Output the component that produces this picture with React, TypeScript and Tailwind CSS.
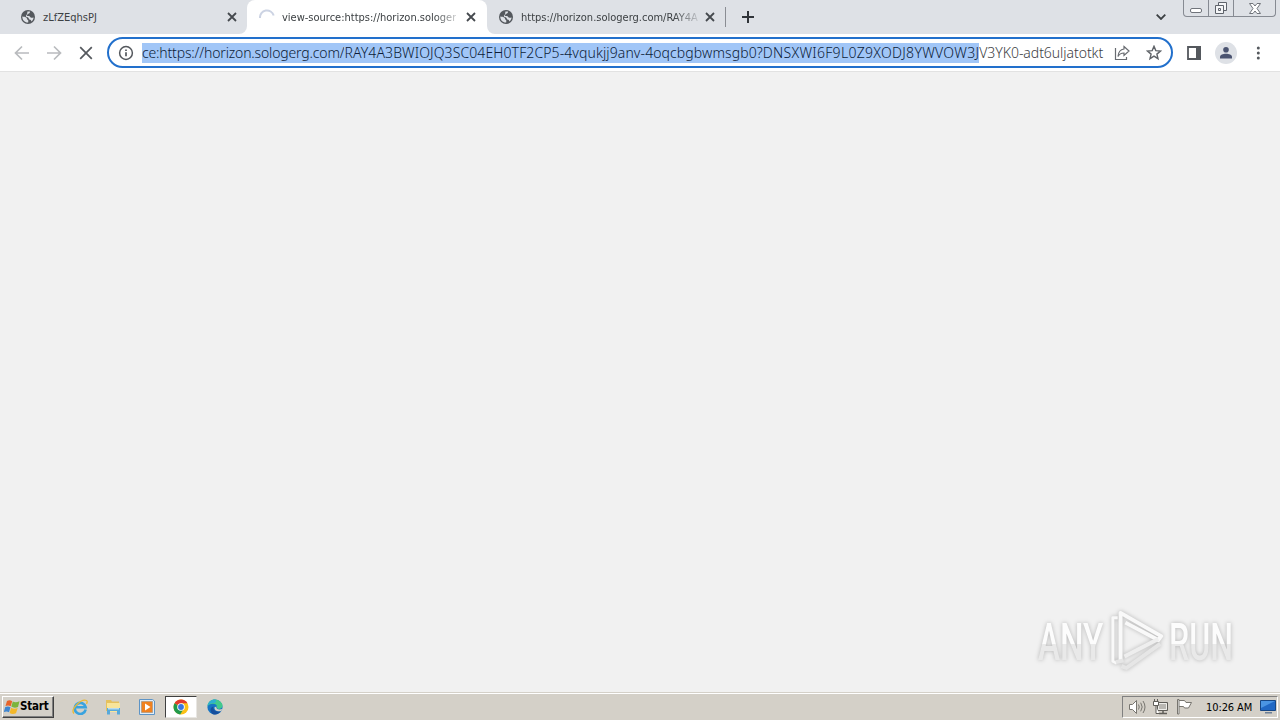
import React from 'react';

interface TabProps {
  title: string;
  loading?: boolean;
  fade?: boolean;
}

interface UrlPart {
  text: string;
  className: string;
}

// tracking differs per part, the address font runs wider on capitals
const urlParts: UrlPart[] = [
  { text: 'ce:https://horizon.sologerg.com/', className: 'bg-[#a1c6f7] text-[#0c1c38] tracking-[-0.16px]' },
  { text: 'RAY4A3BWIOJQ3SC04EH0TF2CP5-4vqukjj9anv-4oqcbgbwmsgb0?', className: 'bg-[#a1c6f7] text-[#0c1c38] tracking-[0.1px]' },
  { text: 'DNSXWI6F9L0Z9XODJ8YWVOW3J', className: 'bg-[#a1c6f7] text-[#0c1c38] tracking-[0.29px]' },
  { text: 'V3YK0-adt6uljatotkt', className: 'text-[#3c4043] tracking-[-0.05px]' },
];

const GlobeIcon = () => (
  <svg viewBox="0 0 16 16" className="w-4 h-4 shrink-0">
    <circle cx="8" cy="8" r="7" fill="#54585d" />
    <path
      d="M2.300 7.500c1.600.3 3.200.3 4.200 1.200.8.8.2 1.700 1.300 2.100.7.300.5 1.500.4 2.700C4.800 13.700 2.200 11 2.300 7.500zM7.400 2.500l2.600.1c.1 1.300-.6 2-1.700 2.100-.9.100-.4 1.100-1.300 1.400-.7.300-.2 1 .7.900 1.500-.2 2.200.2 2.500 1.100.3.900 1.800.6 3.400.4-.2 1.700-1 3-2.200 3.900-.3-1-.7-1.700-1.700-1.800-.9-.1-.8-1.400-1.400-1.900-.7-.6-1.900-.2-2.300-1.100-.4-1 .2-1.800 1.100-2.100"
      fill="#dee1e6"
    />
  </svg>
);

const CloseIcon = () => (
  <svg viewBox="0 0 10 10" className="w-2.5 h-2.5 shrink-0" fill="none" stroke="#45494e" strokeWidth="1.8">
    <path d="M1 1l8 8M9 1L1 9" />
  </svg>
);

const Tab: React.FC<TabProps> = ({ title, loading, fade }) => (
  <div className="flex items-center h-full w-[239px] shrink-0 pl-[11px] pr-[11px]">
    {loading ? (
      <svg viewBox="0 0 16 16" className="w-4 h-4 shrink-0" fill="none" stroke="#ccd3e3" strokeWidth="2">
        <path d="M1 9a7 7 0 0 1 13.700-2.500" />
      </svg>
    ) : (
      <GlobeIcon />
    )}
    <span
      className={`ml-[7px] pt-px whitespace-nowrap text-[11px] leading-[14px] text-[#3c4043] ${
        fade ? 'mask-[linear-gradient(to_right,#000_152px,transparent_182px)]' : ''
      }`}
    >
      {title}
    </span>
    <span className="ml-auto">
      <CloseIcon />
    </span>
  </div>
);

const WindowButtons = () => (
  <div className="flex w-[93px] h-[17px] border border-t-0 border-[#868a92] rounded-b-[4px] mr-1">
    <div className="w-[25px] border-r border-[#868a92] flex items-end justify-center pb-[3px]">
      <div className="w-3 h-[5px] border border-[#70747b] rounded-[2px] bg-white" />
    </div>
    <div className="w-[25px] border-r border-[#868a92] flex items-center justify-center">
      <svg viewBox="0 0 14 14" className="w-3.5 h-3.5" fill="#f4f5f7" stroke="#5e636b">
        <path d="M4.500 1.500h8v8h-8z" />
        <path d="M1.500 4.500h8v8h-8z" />
        <path d="M4.500 7.500h2v2h-2z" />
      </svg>
    </div>
    <div className="flex-1 flex items-center justify-center">
      <svg viewBox="0 0 12 11" className="w-3 h-[11px]" fill="#fff" stroke="#70747b">
        <path d="M.5.500h3.500l2 2.500 2-2.500h3.500l-3.500 5 3.500 5H8L6 8l-2 2.500H.5l3.500-5z" />
      </svg>
    </div>
  </div>
);

const TabStrip = () => (
  <div className="flex h-[34px] shrink-0 bg-white">
    <div className="w-[247px] shrink-0 bg-[#dee1e6] rounded-br-lg pl-[9px]">
      <Tab title="zLfZEqhsPJ" />
    </div>
    <div className="w-60 shrink-0 bg-[linear-gradient(#dee1e6_50%,#fff_50%)]">
      <div className="h-full bg-white rounded-t-lg pl-px">
        <Tab title="view-source:https://horizon.sologer" loading fade />
      </div>
    </div>
    <div className="flex-1 flex items-center bg-[#dee1e6] rounded-bl-lg">
      <Tab title="https://horizon.sologerg.com/RAY4A" fade />
      <div className="w-px h-5 -ml-px bg-[#8a8d93]" />
      <svg viewBox="0 0 12 12" className="w-3 h-3 ml-4" fill="none" stroke="#303439" strokeWidth="2">
        <path d="M6 0v12M0 6h12" />
      </svg>
      <div className="ml-auto h-full flex items-center">
        <svg viewBox="0 0 10 6" className="w-2.5 h-1.5 mr-[17px]" fill="none" stroke="#3c4043" strokeWidth="1.800">
          <path d="M.7.700L5 5 9.300.700" />
        </svg>
        <div className="h-full">
          <WindowButtons />
        </div>
      </div>
    </div>
  </div>
);

const Toolbar = () => (
  <div className="flex items-center h-[38px] shrink-0 bg-white border-b border-[#e2e2e2] pl-[14px]">
    <svg viewBox="0 0 16 16" className="w-4 h-4" fill="none" stroke="#b9bbbe" strokeWidth="1.700">
      <path d="M15 8H2M8 1.500L1.500 8 8 14.500" />
    </svg>
    <svg viewBox="0 0 16 16" className="w-4 h-4 ml-4" fill="none" stroke="#b9bbbe" strokeWidth="1.700">
      <path d="M1 8h13M8 1.500L14.500 8 8 14.500" />
    </svg>
    <svg viewBox="0 0 16 16" className="w-4 h-4 ml-4" fill="none" stroke="#54585d" strokeWidth="1.700">
      <path d="M2.200 2.200l11.600 11.600M13.800 2.200L2.200 13.800" />
    </svg>
    <div className="ml-[13px] w-[1066px] h-[31px] shrink-0 rounded-full border-2 border-[#2270cc] flex items-center pl-[9px]">
      <svg viewBox="0 0 16 16" className="w-4 h-4 shrink-0" fill="none" stroke="#54585d" strokeWidth="1.500">
        <circle cx="8" cy="8" r="6.400" />
        <path d="M8 7.200v4M8 4.400v1.600" strokeWidth="1.700" />
      </svg>
      <div className="ml-2 w-[963px] shrink-0 flex whitespace-nowrap font-['Noto_Sans',sans-serif] font-light text-[14px] leading-5">
        {urlParts.map((part) => (
          <span key={part.text} className={part.className}>
            {part.text}
          </span>
        ))}
      </div>
      <svg viewBox="0 0 16 16" className="w-4 h-4 ml-[9px] shrink-0" fill="none" stroke="#686b70" strokeWidth="1.200">
        <path d="M1.500 3v11.500h11V12" />
        <path d="M10 1.500l5 4.500-5 4.500V8C7 8 5.300 9 4 11.500 4.300 7.300 6.300 4.500 10 4z" />
      </svg>
      <svg viewBox="0 0 16 16" className="w-4 h-4 ml-4 shrink-0" fill="none" stroke="#5f6368" strokeWidth="1.400">
        <path d="M8 1.300l1.800 4.300 4.700.4-3.600 3.100 1.100 4.600L8 11.200l-4 2.500 1.100-4.600L1.500 6l4.700-.4z" />
      </svg>
    </div>
    <svg viewBox="0 0 14 14" className="w-3.5 h-3.5 ml-3.5" fill="none">
      <path d="M1 1h12v12H1z" stroke="#54585d" strokeWidth="1.800" />
      <path d="M9 0h5v14H9z" fill="#54585d" />
    </svg>
    <div className="ml-3.5 w-[22px] h-[22px] rounded-full bg-[#dee1e6] flex items-center justify-center">
      <svg viewBox="0 0 12 12" className="w-3 h-3" fill="#4a5370">
        <circle cx="6" cy="2.800" r="2.800" />
        <path d="M0 11.500V10C0 7.800 3 6.800 6 6.800s6 1 6 3.200v1.500z" />
      </svg>
    </div>
    <svg viewBox="0 0 4 14" className="w-1 h-3.5 ml-[19px]" fill="#54585d">
      <circle cx="2.300" cy="2" r="1.500" />
      <circle cx="2.300" cy="7" r="1.500" />
      <circle cx="2.300" cy="12" r="1.500" />
    </svg>
  </div>
);

const Watermark = () => (
  <div className="flex items-center w-[196px] h-16 font-[Roboto,sans-serif] text-[51px] leading-none drop-shadow-[0_0_2px_rgba(0,0,0,0.25)]">
    <div className="w-[70px] pt-1 shrink-0">
      <span className="block w-max origin-left scale-x-[0.65] font-medium bg-[linear-gradient(#fcfcfc_52%,#e9e9e9_52%)] bg-clip-text text-transparent">
        ANY
      </span>
    </div>
    <svg viewBox="0 0 60 64" className="w-[58px] h-16 shrink-0" fill="none" stroke="#f9f9f9" strokeWidth="4" strokeLinejoin="round">
      <path d="M13 53V4l42 24-3 4-34-18" />
      <path d="M17 49l35-18" stroke="#eeeeee" />
      <path d="M10 9H5v45l4 2" strokeWidth="3" />
      <path d="M8 55l8-2M14 59l5 2 35-25" stroke="#e6e6e6" />
    </svg>
    <div className="w-[64px] ml-[3px] pt-1 shrink-0">
      <span className="block w-max origin-left scale-x-[0.63] font-medium bg-[linear-gradient(#fcfcfc_52%,#e9e9e9_52%)] bg-clip-text text-transparent">
        RUN
      </span>
    </div>
  </div>
);

const StartButton = () => (
  <div className="flex items-center w-[52px] h-[22px] pl-px bg-[#d4d0c8] border border-t-white border-l-white border-r-[#404040] border-b-[#404040] shadow-[inset_-1px_-1px_0_#808080]">
    <svg viewBox="0 0 16 16" className="w-4 h-4 shrink-0">
      <path d="M3 2c2-1.200 3.800-.8 5.200.2L6.700 7.300c-1.500-1-3.200-1.200-5.200-.3z" fill="#e8642a" />
      <path d="M8.800 2.600c1.700 1 3.900 1.100 6.700-.3L14 7.900c-2.500 1.300-4.900.9-6.700-.3z" fill="#7cb43c" />
      <path d="M1.300 8c2.100-.9 3.700-.7 5.200.3L5 13.300C3.500 12.300 2 12-.2 13z" fill="#3f86d0" />
      <path d="M7.100 8.700c1.800 1.200 4 1.400 6.600.3L12 14.300c-2.500 1.200-4.700.9-6.400-.3z" fill="#f4b829" />
    </svg>
    <span className="text-[11.500px] tracking-[-0.2px] leading-none font-bold text-black">Start</span>
  </div>
);

const TrayIcons = () => (
  <>
    <svg viewBox="0 0 18 16" className="w-[18px] h-4" fill="none" stroke="#77756f">
      <path d="M1.500 5.500h3l4-4v13l-4-4h-3z" fill="#fff" />
      <path d="M10.500 5.500q1.500 2.500 0 5M12.700 3.700q3 4.300 0 8.600M15 2q4 6 0 12" />
    </svg>
    <svg viewBox="0 0 17 16" className="w-[17px] h-4 ml-1.5" fill="none" stroke="#5f5d58">
      <path d="M5.500 3.500h10v8h-10z" fill="#b9b7b2" />
      <path d="M6.500 4.500h8v6h-8z" stroke="#efeeea" />
      <path d="M7 14.500h8M11 12v2" strokeWidth="1.500" />
      <path d="M1.500 2.500h5v4h-5zM2.500 0v2M5.500 0v2M4 7v7.500h3" fill="#fff" />
    </svg>
    <svg viewBox="0 0 17 16" className="w-[17px] h-4 ml-[7px]" stroke="#77756f">
      <path d="M2.500 1.500h6l1.500 2h5.500l-3 5.500h-4l-1-1.500h-5z" fill="#fff" />
      <path d="M1.500.500h1.500v14.500H1.500z" fill="#fff" />
    </svg>
  </>
);

const Taskbar = () => (
  <div className="flex items-center h-[28px] shrink-0 bg-[#d4d0c8] border-t border-[#d4d0c8] shadow-[inset_0_1px_0_#fff] pl-0.5 pt-px pr-0.5">
    <StartButton />
    <svg viewBox="0 0 16 16" className="w-4 h-4 ml-[18px]" fill="none">
      <path d="M13.700 10.500A5.500 5.500 0 1 1 13.700 8.300H4" stroke="#39a3df" strokeWidth="2.600" />
      <path d="M2 14.500C-2 10.500 9-.5 14.500 1.500c1 .4.800 2 0 3.300" stroke="#eab935" strokeWidth="1.300" />
    </svg>
    <svg viewBox="0 0 16 16" className="w-4 h-4 ml-[17px]">
      <path d="M1 1h5l1 1.500h7V12H1z" fill="#e5c15e" />
      <path d="M2 4h13v9H2z" fill="#f8e59b" />
      <path d="M2 15.500V9h13v6.500h-3V12H5v3.500z" fill="#58a9da" />
      <path d="M3 9h11v1.500H3z" fill="#b9dcf1" />
    </svg>
    <svg viewBox="0 0 16 16" className="w-4 h-4 ml-[18px]">
      <path d="M.5.500h13l2 1.500v13.500H.5z" fill="#e2edf7" stroke="#5d94c6" />
      <path d="M2 2h12v12H2z" fill="#8dbfe4" />
      <path d="M2.500 2.500h11v11h-11z" fill="#f0811f" />
      <path d="M6 4.500L11.500 8 6 11.500z" fill="#fff" />
    </svg>
    <div className="ml-2.5 w-8 h-[22px] bg-white border border-t-[#404040] border-l-[#404040] border-r-[#e8e6e2] border-b-[#e8e6e2] flex items-center justify-center">
      <svg viewBox="0 0 16 16" className="w-4 h-4">
        <circle cx="8" cy="8" r="7.500" fill="#fbc116" />
        <path d="M8 8L1.500 4.250A7.500 7.500 0 0 1 14.500 4.250H8z" fill="#e33b2e" />
        <path d="M1.500 4.250A7.500 7.500 0 0 0 7.200 15.460L10.500 10z" fill="#229a4c" />
        <circle cx="8" cy="8" r="3.800" fill="#fff" />
        <circle cx="8" cy="8" r="2.900" fill="#3976e0" />
      </svg>
    </div>
    <svg viewBox="0 0 16 16" className="w-4 h-4 ml-2.5">
      <circle cx="8" cy="8" r="7.600" fill="#1674c4" />
      <path d="M.5 7C1-.5 11-2 15 4.500c1.500 3-.3 5.500-3.500 5.500-1.500 0-2-.7-1.500-1.500C10.500 4 4 3.500.5 7z" fill="#42c98d" />
      <path d="M.5 7C1 3 4 .4 8 .400c2 .8 1 3.300-1 3.600C4 4 2 5 .5 7z" fill="#2eafd0" />
      <path d="M6.500 7.500c-1 4 3 6 7.500 4.300-2 3-5.500 4.500-8.500 3.100C2.500 12 3 8.500 6.500 7.500z" fill="#164f9d" />
      <path d="M9.500 7.500c-1 2 1.500 3.800 6 2.500l-1.200 2C10.300 13 6.800 11 7.600 8.200z" fill="#d4d0c8" />
    </svg>
    <div className="ml-auto flex items-center w-[156px] h-[22px] border border-t-[#808080] border-l-[#808080] border-r-white border-b-white pl-[5px] pr-px">
      <TrayIcons />
      <span className="ml-[13px] whitespace-nowrap text-[11px] tracking-[-0.1px] leading-none text-black">10:26 AM</span>
      <svg viewBox="0 0 16 14" className="w-4 h-3.5 ml-auto">
        <path d="M.5.500h15v10H.5z" fill="#2168c4" stroke="#174785" />
        <path d="M1 1h14L1 8z" fill="#4b95e3" />
        <path d="M5 12h7v1.500H5z" fill="#6c7f96" />
      </svg>
    </div>
  </div>
);

export default function App() {
  return (
    <div className="w-[1280px] h-[720px] overflow-hidden flex flex-col bg-[#f1f1f1] font-['DejaVu_Sans_Condensed','DejaVu_Sans',sans-serif]">
      <TabStrip />
      <Toolbar />
      <main className="flex-1 flex items-end justify-end pr-[46px] pb-5">
        <Watermark />
      </main>
      <Taskbar />
    </div>
  );
}
